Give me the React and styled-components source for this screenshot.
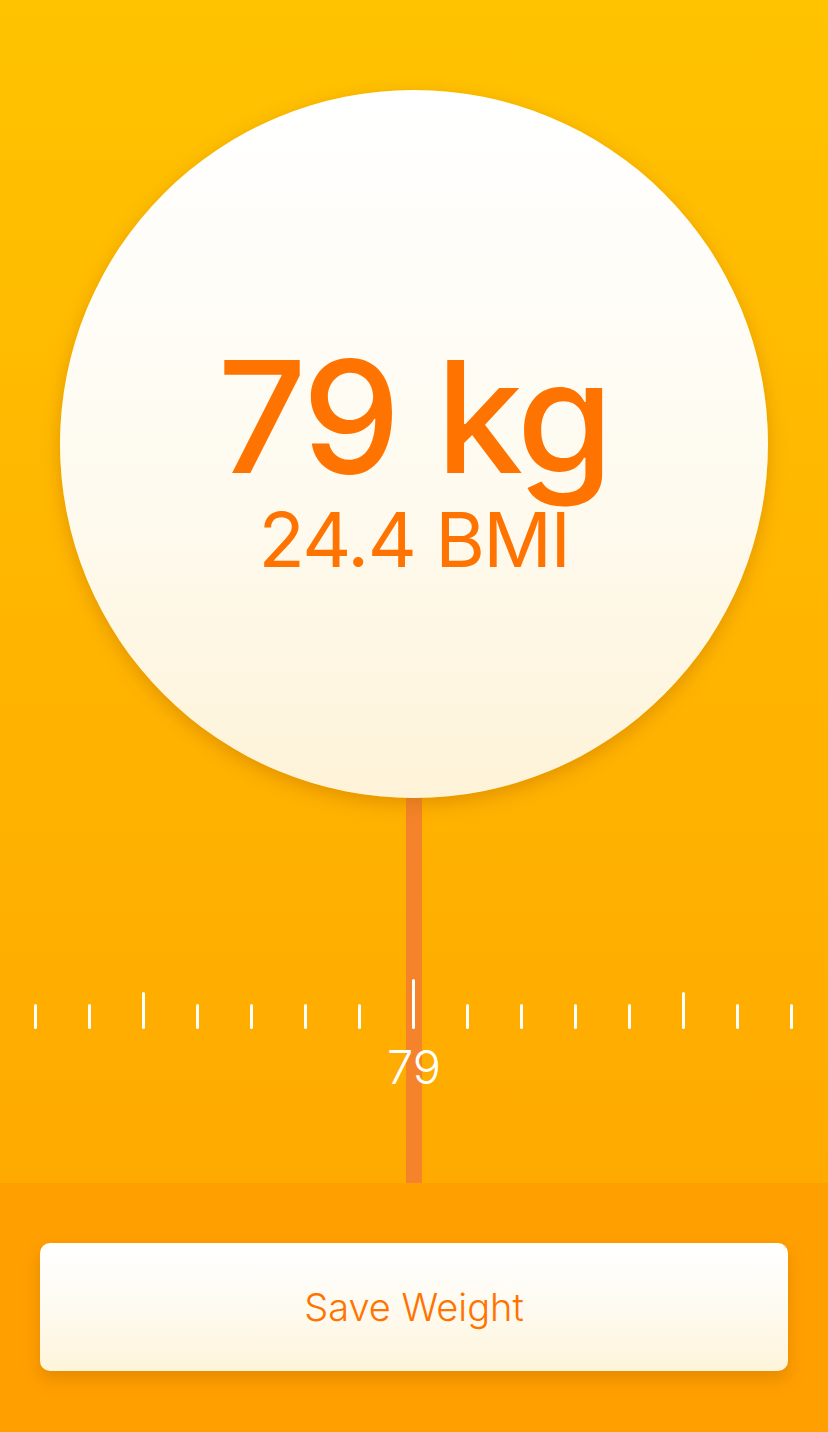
import React from 'react';
import styled, { createGlobalStyle } from 'styled-components';

const GlobalStyle = createGlobalStyle`
    html, body {
        margin: 0;
        padding: 0;
    }
    body {
        font-family: Inter, "Noto Sans", "Liberation Sans", sans-serif;
        -webkit-font-smoothing: antialiased;
    }
`;

const Screen = styled.div`
    width: 828px;
    height: 1432px;
    display: flex;
    flex-direction: column;
    overflow: hidden;
`;

const Stage = styled.section`
    height: 1183px;
    display: flex;
    flex-direction: column;
    align-items: center;
    padding-top: 90px;
    box-sizing: border-box;
    background: linear-gradient(180deg, #ffc300 0%, #ffb700 45%, #ffaa00 100%);
`;

const Dial = styled.div`
    position: relative;
    z-index: 1;
    width: 708px;
    height: 708px;
    flex-shrink: 0;
    box-sizing: border-box;
    padding-top: 22px;
    border-radius: 50%;
    background: linear-gradient(180deg, #ffffff 0%, #fefaee 60%, #fef3d8 100%);
    box-shadow: 0 6px 18px rgba(190, 110, 0, 0.45);
    display: flex;
    flex-direction: column;
    align-items: center;
    justify-content: center;
    color: #ff7300;
`;

const Weight = styled.div`
    font-size: 156px;
    font-weight: 500;
    line-height: 1;
    letter-spacing: -3px;
    margin-top: 6px;
`;

const Bmi = styled.div`
    font-size: 76px;
    font-weight: 400;
    line-height: 1;
    letter-spacing: -1.5px;
    margin-top: 6px;
`;

const Scale = styled.div`
    flex: 1;
    align-self: stretch;
    display: flex;
    flex-direction: column;
    background: linear-gradient(#f5832b, #f5832b) no-repeat center top / 16px 100%;
`;

const Ticks = styled.div`
    display: flex;
    align-items: flex-end;
    height: 50px;
    margin-top: 181px;
    padding-left: 8px;
`;

const TickSlot = styled.div`
    width: 54px;
    display: flex;
    justify-content: center;
`;

const Tick = styled.span`
    width: 3px;
    border-radius: 2px;
    background: #ffffff;
    height: ${p => (p.$size === 'current' ? 50 : p.$size === 'major' ? 37 : 25)}px;
`;

const Reading = styled.div`
    text-align: center;
    color: #ffffff;
    font-size: 47px;
    font-weight: 300;
    line-height: 1;
    margin-top: 14px;
`;

const Footer = styled.footer`
    flex: 1;
    background: #ff9f00;
    padding: 60px 40px 0;
`;

const SaveButton = styled.button`
    width: 100%;
    height: 128px;
    border: none;
    border-radius: 10px;
    background: linear-gradient(180deg, #ffffff 0%, #fefaef 55%, #fef4d9 100%);
    box-shadow: 0 8px 16px rgba(190, 110, 0, 0.4);
    color: #ff7300;
    font-family: Inter, "Noto Sans", sans-serif;
    font-size: 38px;
    font-weight: 300;
    cursor: pointer;
`;

const ticks = [
    'minor', 'minor', 'major', 'minor', 'minor', 'minor', 'minor', 'current',
    'minor', 'minor', 'minor', 'minor', 'major', 'minor', 'minor'
];

const App = () => {
    return (
        <>
            <GlobalStyle />
            <Screen>
                <Stage>
                    <Dial>
                        <Weight>79 kg</Weight>
                        <Bmi>24.4 BMI</Bmi>
                    </Dial>
                    <Scale>
                        <Ticks>
                            {ticks.map((size, i) => (
                                <TickSlot key={i}>
                                    <Tick $size={size} />
                                </TickSlot>
                            ))}
                        </Ticks>
                        <Reading>79</Reading>
                    </Scale>
                </Stage>
                <Footer>
                    <SaveButton>Save Weight</SaveButton>
                </Footer>
            </Screen>
        </>
    );
};

export default App;
